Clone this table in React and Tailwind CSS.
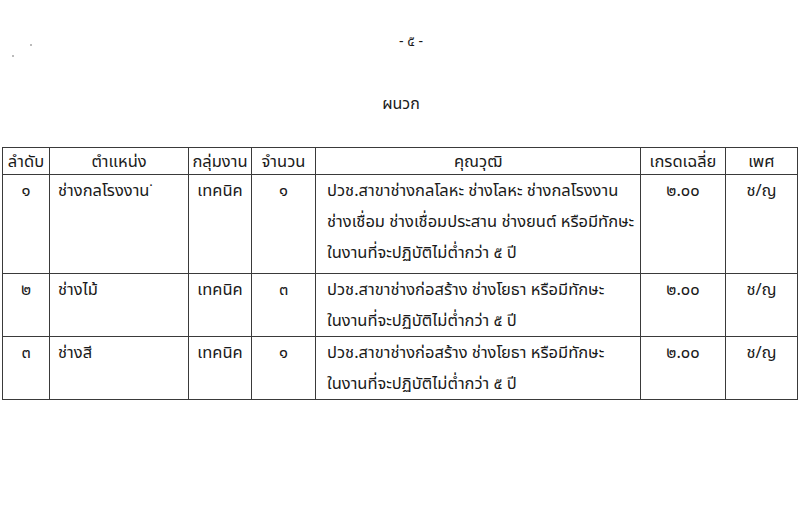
import React from "react";

const font = { fontFamily: '"Noto Sans Thai", "Tahoma", "Noto Sans", "DejaVu Sans", sans-serif' };

const rows = [
  {
    no: "๑",
    pos: "ช่างกลโรงงาน˙",
    group: "เทคนิค",
    count: "๑",
    qual: [
      "ปวช.สาขาช่างกลโลหะ ช่างโลหะ ช่างกลโรงงาน",
      "ช่างเชื่อม ช่างเชื่อมประสาน ช่างยนต์ หรือมีทักษะ",
      "ในงานที่จะปฏิบัติไม่ต่ำกว่า ๕ ปี",
    ],
    h: "h-[99px]",
  },
  {
    no: "๒",
    pos: "ช่างไม้",
    group: "เทคนิค",
    count: "๓",
    qual: ["ปวช.สาขาช่างก่อสร้าง ช่างโยธา หรือมีทักษะ", "ในงานที่จะปฏิบัติไม่ต่ำกว่า ๕ ปี"],
    h: "h-[62px]",
  },
  {
    no: "๓",
    pos: "ช่างสี",
    group: "เทคนิค",
    count: "๑",
    qual: ["ปวช.สาขาช่างก่อสร้าง ช่างโยธา หรือมีทักษะ", "ในงานที่จะปฏิบัติไม่ต่ำกว่า ๕ ปี"],
    h: "h-[61px]",
  },
];

export default function App() {
  const td = "border border-[#3a3a3a] align-top p-0";
  return (
    <div className="w-[800px] h-[525px] bg-white text-[#1a1a1a] overflow-hidden relative" style={font}>
      <div className="absolute left-[30px] top-[44px] w-[2px] h-[2px] bg-[#bbb]" />
      <div className="absolute left-[12px] top-[55px] w-[2px] h-[2px] bg-[#bbb]" />
      <div className="flex flex-col items-center pt-[32px]">
        <div className="h-[20px] text-[14px] leading-[20px] pl-[22px]">- ๕ -</div>
        <div className="mt-[42px] h-[20px] text-[16px] leading-[20px] pl-[2px]">ผนวก</div>
      </div>
      <div className="pl-[2px] mt-[33px]">
        <table className="border-collapse table-fixed text-[16.5px]" style={{ width: 795 }}>
          <colgroup>
            <col style={{ width: 47 }} />
            <col style={{ width: 139 }} />
            <col style={{ width: 63 }} />
            <col style={{ width: 64 }} />
            <col style={{ width: 325 }} />
            <col style={{ width: 85 }} />
            <col style={{ width: 72 }} />
          </colgroup>
          <thead>
            <tr className="h-[27px]">
              {["ลำดับ", "ตำแหน่ง", "กลุ่มงาน", "จำนวน", "คุณวุฒิ", "เกรดเฉลี่ย", "เพศ"].map((t) => (
                <th key={t} className="border border-[#3a3a3a] font-normal text-center align-middle p-0 leading-[25px] whitespace-nowrap">
                  {t}
                </th>
              ))}
            </tr>
          </thead>
          <tbody>
            {rows.map((r) => (
              <tr key={r.no} className={r.h}>
                <td className={`${td} text-center`}><div className="leading-[31px]">{r.no}</div></td>
                <td className={`${td} pl-[8px]`}><div className="leading-[31px]">{r.pos}</div></td>
                <td className={`${td} text-center`}><div className="leading-[31px]">{r.group}</div></td>
                <td className={`${td} text-center`}><div className="leading-[31px]">{r.count}</div></td>
                <td className={`${td} pl-[11px]`}>
                  {r.qual.map((q) => (
                    <div key={q} className="leading-[31px] whitespace-nowrap">{q}</div>
                  ))}
                </td>
                <td className={`${td} text-center`}><div className="leading-[31px]">๒.๐๐</div></td>
                <td className={`${td} text-center`}><div className="leading-[31px]">ช/ญ</div></td>
              </tr>
            ))}
          </tbody>
        </table>
      </div>
    </div>
  );
}
